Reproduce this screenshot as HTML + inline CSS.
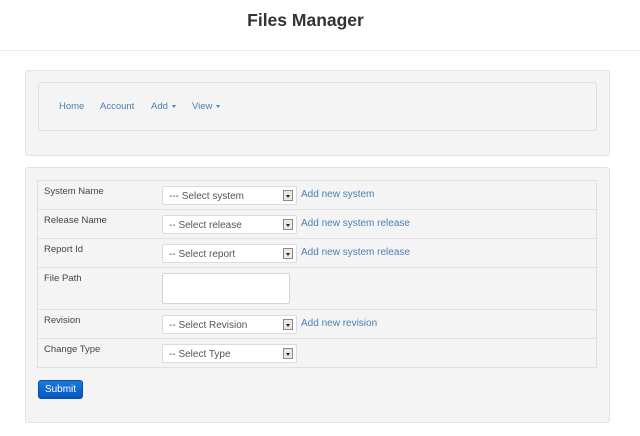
<!DOCTYPE html>
<html><head><meta charset="utf-8"><style>
*{box-sizing:border-box;margin:0;padding:0}
body{width:640px;height:436px;background:#fff;font-family:"Liberation Sans",Arial,sans-serif;position:relative;overflow:hidden;color:#333}
.abs{position:absolute}
h1{position:absolute;left:0;width:611px;top:10px;text-align:center;font-size:17.5px;font-weight:bold;color:#333}
.hline{left:0;top:50px;width:640px;height:1px;background:#ececec}
.panel{background:#f4f4f4;border:1px solid #e3e3e3;border-radius:3px}
.nav{left:38px;top:82px;width:559px;height:49px;border:1px solid #e0e0e0;border-radius:3px;background:#f4f4f4}
.nav a{position:absolute;top:18px;font-size:9.5px;color:#4a7fb5;text-decoration:none}
.car{display:inline-block;width:0;height:0;border-left:2px solid transparent;border-right:2px solid transparent;border-top:3px solid #4a7fb5;vertical-align:middle;margin-left:4px}
.row{position:absolute;left:37px;width:560px;border-top:1px solid #e0e0e0}
.lbl{position:absolute;left:7px;top:5px;font-size:9.5px;color:#444}
.sel{position:absolute;left:125px;top:5px;width:135px;height:19px;background:#fff;border:1px solid #dcdcdc;border-radius:2px;font-size:10px;color:#555;padding:4px 0 0 6px}
.sel i{position:absolute;right:3px;top:3px;width:10px;height:11px;border:1px solid #888;background:#e8e8e8}
.sel i:after{content:"";position:absolute;left:2px;top:4px;border-left:2.5px solid transparent;border-right:2.5px solid transparent;border-top:3px solid #222}
.add{position:absolute;left:264px;top:8px;font-size:10px;color:#4a7fb5}
</style></head><body>
<h1>Files Manager</h1>
<div class="abs hline"></div>
<div class="abs panel" style="left:25px;top:70px;width:585px;height:86px"></div>
<div class="abs nav">
<a style="left:20px">Home</a><a style="left:61px">Account</a><a style="left:112px">Add<span class="car"></span></a><a style="left:153px">View<span class="car"></span></a>
</div>
<div class="abs panel" style="left:25px;top:167px;width:585px;height:256px"></div>
<div class="row" style="top:180px;height:29px"><span class="lbl">System Name</span><div class="sel">--- Select system<i></i></div><span class="add">Add new system</span></div>
<div class="row" style="top:209px;height:29px"><span class="lbl">Release Name</span><div class="sel">-- Select release<i></i></div><span class="add">Add new system release</span></div>
<div class="row" style="top:238px;height:29px"><span class="lbl">Report Id</span><div class="sel">-- Select report<i></i></div><span class="add">Add new system release</span></div>
<div class="row" style="top:267px;height:42px"><span class="lbl">File Path</span><div class="abs" style="left:125px;top:5px;width:128px;height:31px;background:#fff;border:1px solid #d4d4d4;border-radius:2px"></div></div>
<div class="row" style="top:309px;height:29px"><span class="lbl">Revision</span><div class="sel">-- Select Revision<i></i></div><span class="add">Add new revision</span></div>
<div class="row" style="top:338px;height:30px;border-bottom:1px solid #e0e0e0"><span class="lbl">Change Type</span><div class="sel">-- Select Type<i></i></div></div>
<div class="abs" style="left:37px;top:180px;width:1px;height:188px;background:#e0e0e0"></div>
<div class="abs" style="left:596px;top:180px;width:1px;height:188px;background:#e0e0e0"></div>
<div class="abs" style="left:38px;top:380px;width:45px;height:19px;background:linear-gradient(#1a7ae0,#0656c2);border:1px solid #0a4fa8;border-radius:3px;color:#fff;font-size:10px;text-align:center;line-height:17px">Submit</div>
</body></html>
